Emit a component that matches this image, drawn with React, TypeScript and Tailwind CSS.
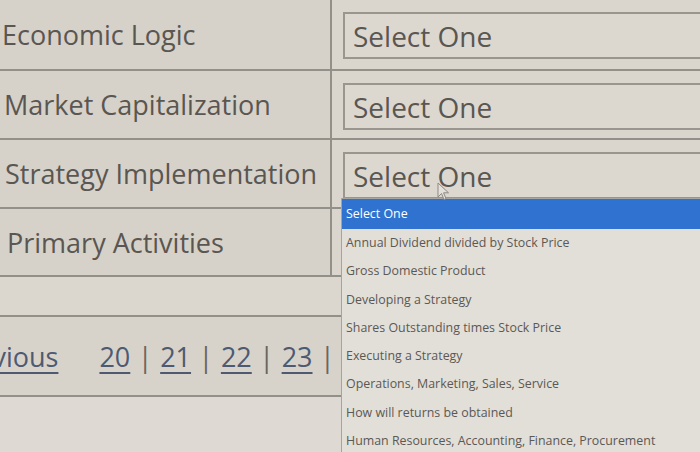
import React from "react";

const rows = [
  { label: "Economic Logic", h: "h-[71px]", lx: "pl-[2px]" },
  { label: "Market Capitalization", h: "h-[69px]", lx: "pl-[4px]" },
  { label: "Strategy Implementation", h: "h-[69px]", lx: "pl-[5px]" },
  { label: "Primary Activities", h: "h-[68px]", lx: "pl-[7px]" },
];

const options = [
  "Annual Dividend divided by Stock Price",
  "Gross Domestic Product",
  "Developing a Strategy",
  "Shares Outstanding times Stock Price",
  "Executing a Strategy",
  "Operations, Marketing, Sales, Service",
  "How will returns be obtained",
  "Human Resources, Accounting, Finance, Procurement",
];

const pages = ["20", "21", "22", "23"];

export default function App() {
  return (
    <div className="relative w-[700px] h-[452px] overflow-hidden bg-[#dedad3] font-['Open_Sans',sans-serif] text-[#5a5651]">
      {/* Question rows */}
      {rows.map((row, i) => (
        <div key={row.label} className={`flex ${row.h} border-b-2 border-[#938f89]`}>
          <div className={`w-[332px] shrink-0 flex items-center ${row.lx} border-r-2 border-[#938f89] bg-[#d6d1c9] text-[27px] leading-none`}>
            {row.label}
          </div>
          <div className="flex-1 pl-[11px] pt-[12px] bg-[#dad6ce]">
            {i < 3 && (
              <div className="h-[47px] w-[400px] border-2 border-[#9a968f] bg-[#dcd8d0] flex items-center pl-[8px] text-[28px] leading-none">
                Select One
              </div>
            )}
          </div>
        </div>
      ))}

      {/* Empty row */}
      <div className="h-[40px] border-b-2 border-[#938f89] bg-[#dbd7cf]" />

      {/* Pagination */}
      <div className="h-[80px] border-b-2 border-[#938f89] bg-[#d7d3cb] flex items-center text-[27px] leading-none">
        <a className="-ml-[50px] underline underline-offset-[5px] text-[#4e5a72]">Previous</a>
        <div className="flex items-center ml-[41px] gap-[7.5px]">
          {pages.map((p) => (
            <React.Fragment key={p}>
              <a className="underline underline-offset-[5px] text-[#4e5a72]">{p}</a>
              <span className="text-[#6a6660]">|</span>
            </React.Fragment>
          ))}
        </div>
      </div>

      {/* Open dropdown list */}
      <div className="absolute left-[341px] top-[198px] w-[400px] h-[260px] border border-[#a7a39d] bg-[#e2dfd9] text-[12.4px] leading-none">
        <div className="h-[30px] bg-[#2f72cf] text-white flex items-center pl-[4px]">Select One</div>
        {options.map((o) => (
          <div key={o} className="h-[28.3px] flex items-center pl-[4px] text-[#5c5853]">
            {o}
          </div>
        ))}
      </div>

      {/* Mouse pointer */}
      <svg className="absolute left-[437px] top-[182px]" width="14" height="20" viewBox="0 0 14 20">
        <path d="M1 1 L1 15 L4.5 11.5 L7 17.5 L9 16.6 L6.6 10.8 L11.5 10.8 Z" fill="#e4e1db" stroke="#8d8983" strokeWidth="1" />
      </svg>
    </div>
  );
}
